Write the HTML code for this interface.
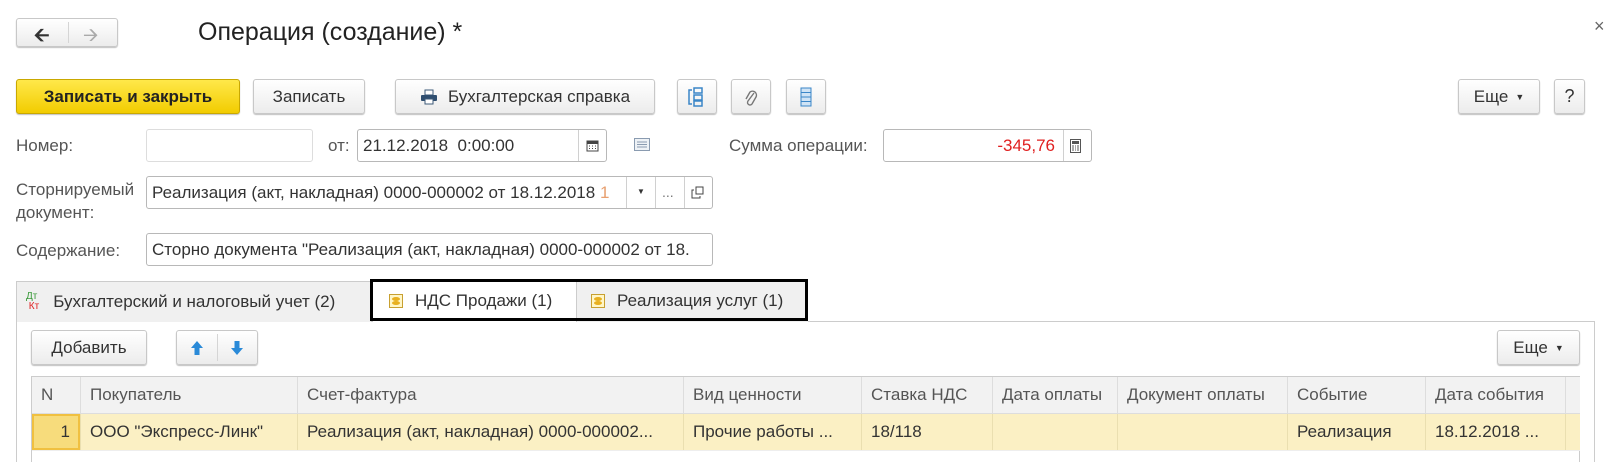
<!DOCTYPE html>
<html><head><meta charset="utf-8"><style>
*{box-sizing:border-box;margin:0;padding:0}
body{width:1615px;height:460px;background:#fff;font-family:"Liberation Sans",Arial,sans-serif;font-size:17px;color:#333;position:relative;overflow:hidden}
.a{position:absolute;white-space:nowrap}
.btn{position:absolute;border:1px solid #c8c8c8;border-radius:3px;background:linear-gradient(#fff,#ececec);box-shadow:0 1px 1px rgba(0,0,0,.25);display:flex;align-items:center;justify-content:center;color:#333}
.inp{position:absolute;border:1px solid #b8b8b8;border-radius:3px;background:#fff;display:flex;align-items:center;padding-left:5px;white-space:nowrap;overflow:hidden;color:#333}
.lbl{position:absolute;color:#555}
.vd{position:absolute;top:0;bottom:0;width:1px;background:#d0d0d0}
.col{position:absolute;top:0;height:100%;border-left:1px solid #ddd;padding-left:9px;display:flex;align-items:center;white-space:nowrap;overflow:hidden}
</style></head><body>

<div class="btn" style="left:16px;top:18px;width:102px;height:29px"><span style="position:absolute;left:17px;top:2px;font-size:19px;color:#333;font-weight:bold">&#129128;</span><div style="position:absolute;left:51px;top:3px;bottom:3px;width:1px;background:#d5d5d5"></div><span style="position:absolute;left:66px;top:2px;font-size:19px;color:#aaa">&#129130;</span></div>
<div class="a" style="left:198px;top:18px;font-size:25px;color:#222">Операция (создание) *</div>
<div class="a" style="left:1594px;top:16px;font-size:18px;color:#666">×</div>

<div class="btn" style="left:16px;top:79px;width:224px;height:35px;background:linear-gradient(#ffe84a,#f2cc00);border-color:#c9a800;font-weight:bold;color:#222">Записать и закрыть</div>
<div class="btn" style="left:253px;top:79px;width:112px;height:35px">Записать</div>
<div class="btn" style="left:395px;top:79px;width:260px;height:35px"><svg width="18" height="16" viewBox="0 0 18 16" style="margin-right:10px"><rect x="5" y="1" width="8" height="5" fill="#fff" stroke="#3d5a78"/><rect x="1" y="6" width="16" height="6" rx="1" fill="#2f4e70"/><rect x="5" y="10" width="8" height="5" fill="#fff" stroke="#3d5a78"/></svg>Бухгалтерская справка</div>
<div class="btn" style="left:677px;top:79px;width:40px;height:35px"><svg width="18" height="20" viewBox="0 0 18 20"><rect x="6" y="1" width="8" height="5" fill="none" stroke="#3a86c8" stroke-width="1.5"/><rect x="6" y="8" width="8" height="5" fill="none" stroke="#3a86c8" stroke-width="1.5"/><rect x="6" y="14" width="8" height="5" fill="none" stroke="#3a86c8" stroke-width="1.5"/><path d="M4 3H1V17H4" fill="none" stroke="#3a86c8" stroke-width="1.5"/></svg></div>
<div class="btn" style="left:731px;top:79px;width:40px;height:35px"><svg width="14" height="20" viewBox="0 0 14 20"><path d="M10 6 L4 14 a2.5 2.5 0 0 0 4 3 L12 10 a4 4 0 0 0-6-5 L2 12" fill="none" stroke="#777" stroke-width="1.4"/></svg></div>
<div class="btn" style="left:786px;top:79px;width:40px;height:35px"><svg width="12" height="20" viewBox="0 0 12 20"><rect x="1" y="1" width="10" height="18" fill="#cfe3f5" stroke="#3a86c8"/><path d="M1 5.5H11M1 10H11M1 14.5H11" stroke="#3a86c8"/></svg></div>
<div class="btn" style="left:1458px;top:79px;width:82px;height:35px">Еще <span style="font-size:9px;margin-left:7px">▼</span></div>
<div class="btn" style="left:1554px;top:79px;width:31px;height:35px;font-size:18px">?</div>

<div class="lbl" style="left:16px;top:136px">Номер:</div>
<div class="inp" style="left:146px;top:129px;width:167px;height:33px;border-color:#ddd"></div>
<div class="lbl" style="left:328px;top:136px">от:</div>
<div class="inp" style="left:357px;top:129px;width:250px;height:33px">21.12.2018&nbsp; 0:00:00<div class="vd" style="left:220px"></div><svg class="a" style="left:228px;top:9px" width="13" height="13" viewBox="0 0 13 13"><rect x="1" y="2" width="11" height="10" fill="#fff" stroke="#444"/><rect x="1" y="2" width="11" height="3" fill="#444"/><path d="M3 7h1M6 7h1M9 7h1M3 9.5h1M6 9.5h1M9 9.5h1" stroke="#444"/></svg></div>
<svg class="a" style="left:634px;top:138px" width="16" height="13" viewBox="0 0 16 13"><rect x=".5" y=".5" width="15" height="12" fill="#eef2f6" stroke="#8a9bb0"/><path d="M3 4h10M3 6.5h10M3 9h10" stroke="#8a9bb0"/></svg>
<div class="lbl" style="left:729px;top:136px">Сумма операции:</div>
<div class="inp" style="left:883px;top:129px;width:209px;height:33px;justify-content:flex-end;padding-right:36px;color:#e02020">-345,76<div class="vd" style="left:179px"></div><svg class="a" style="left:186px;top:9px" width="11" height="14" viewBox="0 0 11 14"><rect x=".5" y=".5" width="10" height="13" fill="#fff" stroke="#555"/><rect x="2" y="2" width="7" height="3" fill="#555"/><path d="M2 7h2M5 7h1M7 7h2M2 9h2M5 9h1M7 9h2M2 11h2M5 11h1M7 11h2" stroke="#555"/></svg></div>

<div class="lbl" style="left:16px;top:178px;line-height:23px">Сторнируемый<br>документ:</div>
<div class="inp" style="left:146px;top:176px;width:567px;height:33px"><span style="width:472px;overflow:hidden;display:inline-block">Реализация (акт, накладная) 0000-000002 от 18.12.2018 <span style="color:#e8a070">1</span></span>
<div class="vd" style="left:479px"></div><div class="vd" style="left:508px"></div><div class="vd" style="left:537px"></div>
<span class="a" style="left:490px;top:10px;font-size:8px">▼</span><span class="a" style="left:515px;top:7px;color:#777;font-size:14px">...</span>
<svg class="a" style="left:544px;top:9px" width="13" height="13" viewBox="0 0 13 13"><rect x="5" y="1" width="7" height="7" fill="none" stroke="#444"/><path d="M3 4H1V12H9V10" fill="none" stroke="#444"/></svg></div>

<div class="lbl" style="left:16px;top:241px">Содержание:</div>
<div class="inp" style="left:146px;top:233px;width:567px;height:33px">Сторно документа "Реализация (акт, накладная) 0000-000002 от 18.</div>

<div class="a" style="left:16px;top:282px;width:1579px;height:40px;border-bottom:1px solid #ccc"></div>
<div class="a" style="left:16px;top:281px;width:356px;height:41px;background:#f0f0f0;border:1px solid #ccc;border-bottom:none;display:flex;align-items:center;padding-left:9px"><span style="font-size:10px;line-height:10px;margin-right:14px;display:inline-block"><span style="color:#3a9a3a">Дт</span><br><span style="color:#e02020">&nbsp;Кт</span></span>Бухгалтерский и налоговый учет (2)</div>
<div class="a" style="left:373px;top:279px;width:203px;height:43px;background:#fff;display:flex;align-items:center;padding-left:16px"><svg width="14" height="14" style="margin-right:12px"><rect x=".5" y=".5" width="13" height="13" fill="#fff6c8" stroke="#c8a030"/><ellipse cx="7" cy="5" rx="4" ry="2" fill="#e8b020"/><ellipse cx="7" cy="9" rx="4" ry="2" fill="#e8b020"/></svg>НДС Продажи (1)</div>
<div class="a" style="left:576px;top:279px;width:232px;height:43px;background:#f0f0f0;border-left:1px solid #ccc;display:flex;align-items:center;padding-left:14px"><svg width="14" height="14" style="margin-right:12px"><rect x=".5" y=".5" width="13" height="13" fill="#fff6c8" stroke="#c8a030"/><ellipse cx="7" cy="5" rx="4" ry="2" fill="#e8b020"/><ellipse cx="7" cy="9" rx="4" ry="2" fill="#e8b020"/></svg>Реализация услуг (1)</div>
<div class="a" style="left:370px;top:279px;width:438px;height:42px;border:3px solid #000"></div>
<div class="a" style="left:16px;top:322px;width:1579px;height:140px;border-left:1px solid #ccc;border-right:1px solid #ccc"></div>

<div class="btn" style="left:31px;top:330px;width:116px;height:35px">Добавить</div>
<div class="btn" style="left:176px;top:330px;width:82px;height:35px"><svg width="14" height="16" style="position:absolute;left:13px;top:9px"><path d="M7 1L13 8H9.5V15H4.5V8H1Z" fill="#2a8ad8"/></svg><div style="position:absolute;left:40px;top:3px;bottom:3px;width:1px;background:#d5d5d5"></div><svg width="14" height="16" style="position:absolute;left:53px;top:9px"><path d="M7 15L13 8H9.5V1H4.5V8H1Z" fill="#2a8ad8"/></svg></div>
<div class="btn" style="left:1497px;top:330px;width:83px;height:35px">Еще <span style="font-size:9px;margin-left:7px">▼</span></div>

<div class="a" style="left:31px;top:376px;width:1549px;height:86px;border:1px solid #ccc;border-bottom:none"></div>
<div class="a" style="left:32px;top:377px;width:1548px;height:37px;background:#f2f2f2;border-bottom:1px solid #ddd;color:#555">
<div class="col" style="left:0;width:48px;border:none">N</div>
<div class="col" style="left:48px">Покупатель</div>
<div class="col" style="left:265px">Счет-фактура</div>
<div class="col" style="left:651px">Вид ценности</div>
<div class="col" style="left:829px">Ставка НДС</div>
<div class="col" style="left:960px">Дата оплаты</div>
<div class="col" style="left:1085px">Документ оплаты</div>
<div class="col" style="left:1255px">Событие</div>
<div class="col" style="left:1393px">Дата события</div>
<div class="col" style="left:1533px"></div>
</div>
<div class="a" style="left:32px;top:414px;width:1548px;height:37px;background:#fbf0c4;border-bottom:1px solid #eee;color:#333">
<div class="col" style="left:0;width:48px;border:2px solid #f0c040;background:#f7dc7c;justify-content:flex-end;padding-right:8px">1</div>
<div class="col" style="left:48px;border-color:#eadfb0">ООО "Экспресс-Линк"</div>
<div class="col" style="left:265px;border-color:#eadfb0">Реализация (акт, накладная) 0000-000002...</div>
<div class="col" style="left:651px;border-color:#eadfb0">Прочие работы ...</div>
<div class="col" style="left:829px;border-color:#eadfb0">18/118</div>
<div class="col" style="left:960px;border-color:#eadfb0"></div>
<div class="col" style="left:1085px;border-color:#eadfb0"></div>
<div class="col" style="left:1255px;border-color:#eadfb0">Реализация</div>
<div class="col" style="left:1393px;border-color:#eadfb0">18.12.2018 ...</div>
<div class="col" style="left:1533px;border-color:#eadfb0"></div>
</div>
</body></html>
